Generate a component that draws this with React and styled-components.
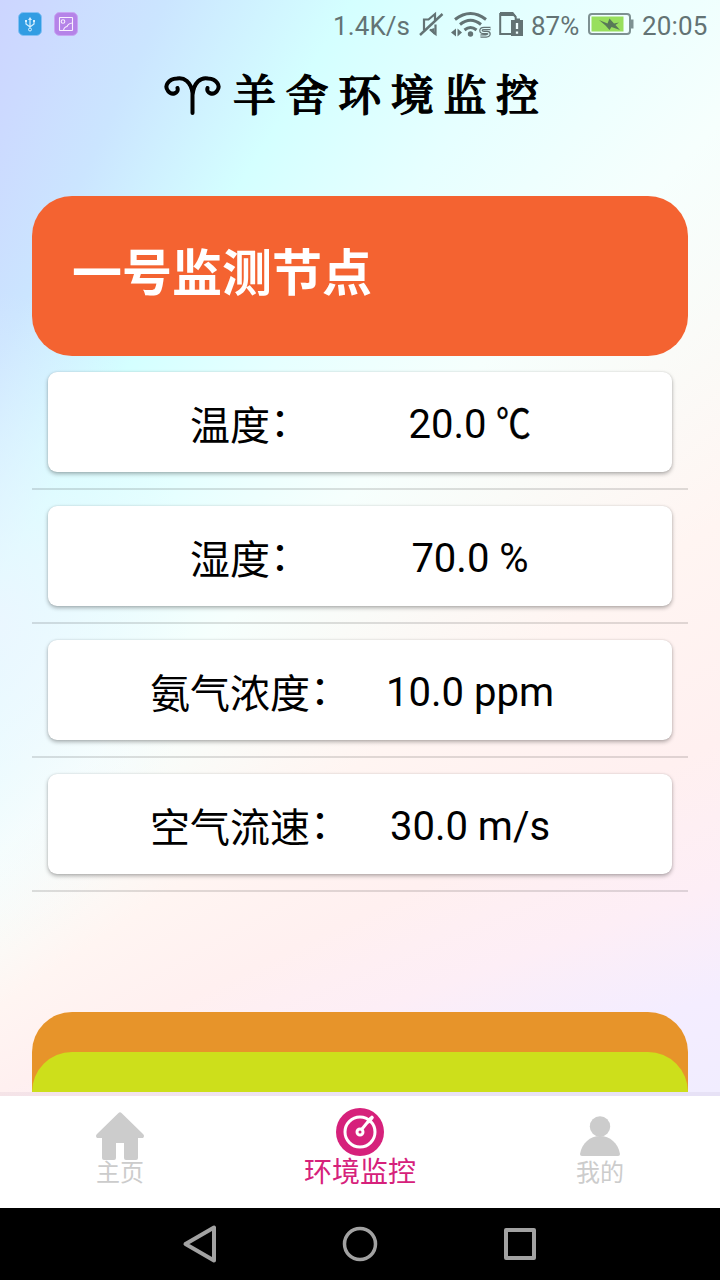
import React from "react";
import styled, { createGlobalStyle } from "styled-components";

const Global = createGlobalStyle`
  * { box-sizing: border-box; }
  body { margin: 0; font-family: Roboto, "Noto Sans CJK SC", sans-serif; }
`;

const Screen = styled.div`
  width: 720px;
  height: 1280px;
  overflow: hidden;
  display: flex;
  flex-direction: column;
  background:
    radial-gradient(ellipse 190px 330px at 0 620px, rgba(240, 244, 255, 0.75), rgba(240, 246, 255, 0.35) 55%, rgba(240, 248, 255, 0)),
    conic-gradient(
      from 0deg at -450px 1310px,
      #ccd3ff 18deg, #ccdaff 21deg, #cbe5ff 25.2deg, #d4ffff 31.5deg,
      #e6ffff 37.5deg, #f6fffd 44.5deg, #fafbf8 49.5deg, #fff5f2 56deg,
      #fff0f0 64deg, #fdeef6 70deg, #f4edff 75deg, #f0edff 81deg
    );
`;

const StatusBar = styled.div`
  height: 48px;
  flex: none;
  display: flex;
  align-items: center;
  justify-content: space-between;
  padding: 0 10px 0 18px;
  color: #637374;
  font-size: 26px;
  line-height: 48px;
`;

const StatusGroup = styled.div`
  display: flex;
  align-items: center;
  height: 48px;
  gap: ${(p) => p.$gap}px;
`;

const StatusText = styled.span`
  width: ${(p) => p.$w}px;
  padding-top: 3px;
  letter-spacing: ${(p) => p.$spacing || 0}px;
  white-space: nowrap;
`;

const StatusIcon = styled.svg`
  display: block;
  flex: none;
  margin-left: ${(p) => p.$ml || 0}px;
  margin-right: ${(p) => p.$mr || 0}px;
`;

const Header = styled.header`
  height: 148px;
  flex: none;
  display: flex;
  padding: 22px 0 0 163px;
  gap: 12px;
`;

const Brand = styled.h1`
  margin: 0;
  color: #000;
  font: 500 43px/46px "Noto Serif CJK SC", "Noto Sans CJK SC", serif;
  letter-spacing: 9.6px;
  -webkit-text-stroke: 1.3px #000;
  white-space: nowrap;
`;

const Content = styled.main`
  height: 896px;
  flex: none;
  display: flex;
  flex-direction: column;
  justify-content: space-between;
  padding: 0 32px;
`;

const NodeTitle = styled.h2`
  margin: 0;
  height: 160px;
  padding: 41px 40px 0;
  border-radius: 40px;
  background: #f46331;
  color: #fff;
  font-size: 50px;
  line-height: 74px;
  font-weight: 700;
`;

const Row = styled.div`
  height: 134px;
  padding: 16px 16px 0;
  border-bottom: 2px solid rgba(0, 0, 0, 0.12);
`;

const Card = styled.div`
  height: 100px;
  display: flex;
  align-items: center;
  justify-content: center;
  gap: 20px;
  border-radius: 9px;
  background: #fff;
  box-shadow: 0 2px 4px rgba(0, 0, 0, 0.3), 0 0 2px rgba(0, 0, 0, 0.12);
  color: #000;
  font-size: 40px;
  line-height: 56px;
  white-space: nowrap;
`;

const Label = styled.div`
  width: 200px;
  padding-top: 10px;
  text-align: center;
`;

const Colon = styled.span`
  display: inline-block;
  transform: translateY(-4px);
`;

const Reading = styled.div`
  width: 200px;
  padding-top: 6px;
  text-align: center;
`;

const Celsius = styled.span`
  display: inline-block;
  margin-right: -5px;
  transform: scaleX(0.87);
  transform-origin: left;
  -webkit-text-stroke: 0.4px #000;
`;

const NextNode = styled.div`
  height: 80px;
  padding-top: 40px;
  border-radius: 40px 40px 0 0;
  background: #e7942a;
`;

const LastNode = styled.div`
  height: 40px;
  border-radius: 40px 40px 0 0;
  background: #cddf1b;
`;

const TabBar = styled.nav`
  height: 116px;
  flex: none;
  display: flex;
  border-top: 4px solid rgba(90, 50, 110, 0.06);
  background: #fff;
  background-clip: padding-box;
`;

const Tab = styled.div`
  flex: 1;
  display: flex;
  flex-direction: column;
  align-items: center;
  padding-top: 12px;
  color: ${(p) => (p.$active ? "#d6217b" : "#cccccc")};
  font-size: ${(p) => (p.$active ? 28 : 24)}px;
  line-height: 34px;
  svg { display: block; flex: none; overflow: visible; }
`;

const SystemBar = styled.div`
  height: 72px;
  flex: none;
  display: flex;
  align-items: center;
  justify-content: center;
  gap: 120px;
  background: #000;
`;

const readings = [
  ["温度", "20.0", <Celsius key="c">℃</Celsius>],
  ["湿度", "70.0", "%"],
  ["氨气浓度", "10.0", "ppm"],
  ["空气流速", "30.0", "m/s"],
];

export default function App() {
  return (
    <>
      <Global />
      <Screen>
        <StatusBar>
          <StatusGroup $gap={12}>
            <StatusIcon width="24" height="24" viewBox="0 0 24 24">
              <rect x=".5" y=".5" width="23" height="23" rx="5" fill="#329de3" stroke="#83bff5" />
              <path d="M12 7v9M8 9v3l4 3 4-3V9" fill="none" stroke="#d8f0ff" strokeWidth="1.2" />
              <path d="M12 5l-2 3h4zM7 8h2v2H7zM15 8h2v2h-2z" fill="#d8f0ff" />
              <circle cx="12" cy="17.5" r="1.5" fill="none" stroke="#d8f0ff" />
            </StatusIcon>
            <StatusIcon width="24" height="24" viewBox="0 0 24 24">
              <rect x=".5" y=".5" width="23" height="23" rx="5" fill="#b583e8" stroke="#c7a5f3" />
              <g fill="none" stroke="#f8efff" strokeWidth="1.1">
                <rect x="5.5" y="5.5" width="13" height="13" rx=".5" />
                <circle cx="9" cy="9.5" r="1.8" />
                <path d="M9.5 18.5Q10 15 13 14.5Q14 11.5 18.5 11" />
              </g>
            </StatusIcon>
          </StatusGroup>
          <StatusGroup $gap={0}>
            <StatusText $w={86} $spacing={0.1}>1.4K/s</StatusText>
            <StatusIcon width="25" height="28" viewBox="0 0 25 28">
              <g fill="none" stroke="#637374" strokeWidth="2.2">
                <path d="M1 25L23.500 4" strokeWidth="2.400" />
                <path d="M5 20V9.500H9.500L16 4V10M16.500 14.500V24L11 19.500" />
              </g>
              <path d="M10.500 19.500l5-1.500v7z" fill="#637374" />
            </StatusIcon>
            <StatusIcon width="42" height="28" viewBox="0 0 42 28" $ml={7}>
              <g fill="none" stroke="#637374">
                <path d="M4 9.500Q19.500-2.500 35 9.500M9 14.500Q19.500 6 30 14.500M13.500 20Q19.500 15 25.500 20" strokeWidth="3" />
                <path d="M39.500 18.500H33q-3 0-3 2t3 2h3q2 0 2 1.500T35 26h-5.500" strokeWidth="3.600" />
              </g>
              <path d="M39.500 18.500H33q-3 0-3 2t3 2h3q2 0 2 1.500T35 26h-5.500" fill="none" stroke="#ddfafa" strokeWidth="1.200" />
              <circle cx="19.500" cy="24" r="2.700" fill="#637374" />
              <path d="M0 22.500l5-4v8zM6.500 18.500l4.500 4-4.500 4z" fill="#637374" />
            </StatusIcon>
            <StatusIcon width="25" height="26" viewBox="0 0 25 26" $ml={6} $mr={7}>
              <path d="M1.200 2h12l3.500 4v3M1.200 2v21h11" fill="none" stroke="#637374" strokeWidth="2" />
              <path d="M1 1h13l3 4H1zM12 9h4v-1.500h5V9h3v16H12z" fill="#637374" />
              <path d="M18 12v6M18 20.500v2.300" stroke="#efffff" strokeWidth="2.300" />
            </StatusIcon>
            <StatusText $w={57} $spacing={0}>87%</StatusText>
            <StatusIcon width="46" height="24" viewBox="0 0 46 24" $mr={8}>
              <rect x="1" y="2" width="41" height="20" rx="3" fill="#f0ffff" stroke="#7e9192" strokeWidth="2" />
              <rect x="3.500" y="4.500" width="32" height="15" fill="#98df5d" />
              <path d="M43 7.500h2.500v9H43z" fill="#7e9192" />
              <path d="M11 8L19.500 11.500L21.500 6.500L26 11.500L31 10.500L27.500 13L32 18L23.500 15L21.500 18L17.500 13.500Z" fill="#587957" />
            </StatusIcon>
            <StatusText $w={68} $spacing={0.15}>20:05</StatusText>
          </StatusGroup>
        </StatusBar>
        <Header>
          <svg width="58" height="50" viewBox="0 0 58 50" fill="none" stroke="#000" strokeWidth="4" strokeLinecap="round">
            <path d="M29.500 43V23C28 12 21 7 14 8.500C5 9 1 16 5 21C9 26 16 23 14.500 18M29.500 25C31 12 38 7 45 8.500C54 9 58 16 54 21C50 26 43 23 44.500 18" />
          </svg>
          <Brand>羊舍环境监控</Brand>
        </Header>
        <Content>
          <section>
            <NodeTitle>一号监测节点</NodeTitle>
            {readings.map(([label, value, unit]) => (
              <Row key={label}>
                <Card>
                  <Label>{label}<Colon>：</Colon></Label>
                  <Reading>{value} {unit}</Reading>
                </Card>
              </Row>
            ))}
          </section>
          <NextNode><LastNode /></NextNode>
        </Content>
        <TabBar>
          <Tab>
            <svg width="48" height="48" viewBox="0 0 48 48" fill="currentColor">
              <path d="M22.500 5Q24 3.500 25.500 5L47 26Q49 28 47 30H42V50Q42 52 40 52H30Q28 52 28 50V35H20V50Q20 52 18 52H8Q6 52 6 50V30H1Q-1 28 1 26Z" />
            </svg>
            主页
          </Tab>
          <Tab $active>
            <svg width="48" height="48" viewBox="0 0 48 48">
              <circle cx="24" cy="24" r="24" fill="currentColor" />
              <g fill="none" stroke="#fff" strokeWidth="3">
                <circle cx="24" cy="24" r="15" />
                <circle cx="24" cy="24" r="3" />
                <path d="M26 21L35 10" />
                <path d="M32.500 13.500L36 9.500" strokeWidth="3.600" strokeLinecap="round" />
              </g>
            </svg>
            环境监控
          </Tab>
          <Tab>
            <svg width="48" height="48" viewBox="0 0 48 48" fill="currentColor">
              <circle cx="24" cy="18.500" r="10.200" />
              <path d="M4 46C6 35 14 28 24 28S42 35 44 46Q44 48 42 48H6Q4 48 4 46Z" />
            </svg>
            我的
          </Tab>
        </TabBar>
        <SystemBar>
          <svg width="40" height="40" viewBox="0 0 40 40" fill="none" stroke="#a2a2a2" strokeWidth="4" strokeLinejoin="round"><path d="M5.500 20L34 3.500V36.500Z" /></svg>
          <svg width="40" height="40" viewBox="0 0 40 40" fill="none" stroke="#a2a2a2" strokeWidth="3.500"><circle cx="20" cy="20" r="15.500" /></svg>
          <svg width="40" height="40" viewBox="0 0 40 40" fill="none" stroke="#a2a2a2" strokeWidth="4" strokeLinejoin="round"><path d="M6 6h28v28H6z" /></svg>
        </SystemBar>
      </Screen>
    </>
  );
}
